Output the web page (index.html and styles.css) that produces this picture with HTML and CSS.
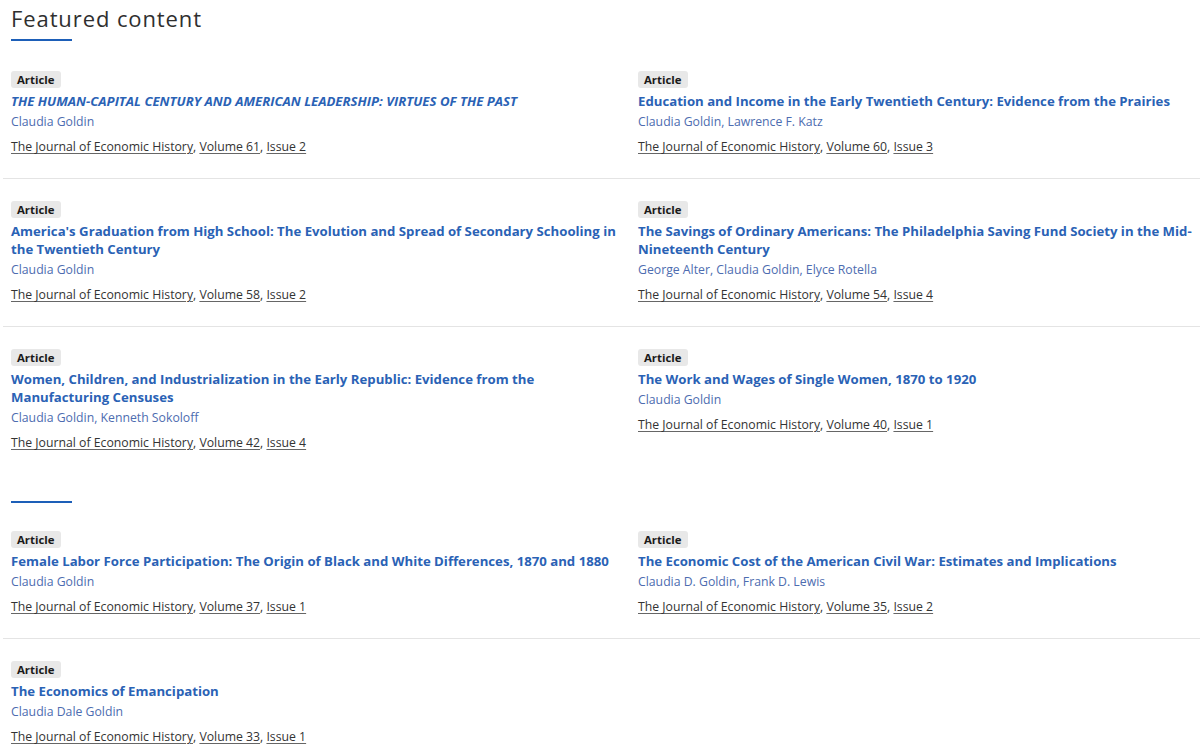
FILE: index.html
```html
<!DOCTYPE html>
<html lang="en">
<head>
<meta charset="utf-8">
<title>Featured content</title>
<link rel="stylesheet" href="styles.css">
</head>
<body>
<section class="featured">
  <div class="section-head">
    <h2 class="section-title">Featured content</h2>
    <div class="section-bar"></div>
  </div>
  <div class="row">
    <article class="item">
      <span class="badge">Article</span>
      <a class="title italic" href="#">THE HUMAN-CAPITAL CENTURY AND AMERICAN LEADERSHIP: VIRTUES OF THE PAST</a>
      <div class="authors">Claudia Goldin</div>
      <div class="source"><a href="#">The Journal of Economic History</a>, <a href="#">Volume 61</a>, <a href="#">Issue 2</a></div>
    </article>
    <article class="item">
      <span class="badge">Article</span>
      <a class="title" href="#">Education and Income in the Early Twentieth Century: Evidence from the Prairies</a>
      <div class="authors">Claudia Goldin, Lawrence F. Katz</div>
      <div class="source"><a href="#">The Journal of Economic History</a>, <a href="#">Volume 60</a>, <a href="#">Issue 3</a></div>
    </article>
  </div>
  <div class="row">
    <article class="item">
      <span class="badge">Article</span>
      <a class="title" href="#">America's Graduation from High School: The Evolution and Spread of Secondary Schooling in the Twentieth Century</a>
      <div class="authors">Claudia Goldin</div>
      <div class="source"><a href="#">The Journal of Economic History</a>, <a href="#">Volume 58</a>, <a href="#">Issue 2</a></div>
    </article>
    <article class="item">
      <span class="badge">Article</span>
      <a class="title" href="#">The Savings of Ordinary Americans: The Philadelphia Saving Fund Society in the Mid-Nineteenth Century</a>
      <div class="authors">George Alter, Claudia Goldin, Elyce Rotella</div>
      <div class="source"><a href="#">The Journal of Economic History</a>, <a href="#">Volume 54</a>, <a href="#">Issue 4</a></div>
    </article>
  </div>
  <div class="row last">
    <article class="item">
      <span class="badge">Article</span>
      <a class="title" href="#">Women, Children, and Industrialization in the Early Republic: Evidence from the Manufacturing Censuses</a>
      <div class="authors">Claudia Goldin, Kenneth Sokoloff</div>
      <div class="source"><a href="#">The Journal of Economic History</a>, <a href="#">Volume 42</a>, <a href="#">Issue 4</a></div>
    </article>
    <article class="item">
      <span class="badge">Article</span>
      <a class="title" href="#">The Work and Wages of Single Women, 1870 to 1920</a>
      <div class="authors">Claudia Goldin</div>
      <div class="source"><a href="#">The Journal of Economic History</a>, <a href="#">Volume 40</a>, <a href="#">Issue 1</a></div>
    </article>
  </div>
</section>
<section class="featured second">
  <div class="section-head empty">
    <div class="section-bar"></div>
  </div>
  <div class="row">
    <article class="item">
      <span class="badge">Article</span>
      <a class="title" href="#">Female Labor Force Participation: The Origin of Black and White Differences, 1870 and 1880</a>
      <div class="authors">Claudia Goldin</div>
      <div class="source"><a href="#">The Journal of Economic History</a>, <a href="#">Volume 37</a>, <a href="#">Issue 1</a></div>
    </article>
    <article class="item">
      <span class="badge">Article</span>
      <a class="title" href="#">The Economic Cost of the American Civil War: Estimates and Implications</a>
      <div class="authors">Claudia D. Goldin, Frank D. Lewis</div>
      <div class="source"><a href="#">The Journal of Economic History</a>, <a href="#">Volume 35</a>, <a href="#">Issue 2</a></div>
    </article>
  </div>
  <div class="row last">
    <article class="item">
      <span class="badge">Article</span>
      <a class="title" href="#">The Economics of Emancipation</a>
      <div class="authors">Claudia Dale Goldin</div>
      <div class="source"><a href="#">The Journal of Economic History</a>, <a href="#">Volume 33</a>, <a href="#">Issue 1</a></div>
    </article>
    <div class="item"></div>
  </div>
</section>
</body>
</html>
```

FILE: styles.css
```css
html, body {
  margin: 0;
  padding: 0;
  background: #ffffff;
}

body {
  font-family: "Open Sans", "Noto Sans", "Liberation Sans", sans-serif;
  color: #333333;
  overflow: hidden;
  height: 755px;
}

.featured {
  margin-left: 3px;
  width: 1197px;
}

.section-head {
  padding: 0 0 8px 8px;
}

.section-title {
  margin: 0;
  padding-top: 3px;
  font-family: "Open Sans", "Noto Sans", sans-serif;
  font-weight: 400;
  font-size: 22px;
  line-height: 30px;
  letter-spacing: 0.9px;
  color: #2f2f2f;
  height: 36px;
}

.section-bar {
  width: 61px;
  height: 2px;
  background: #1d5fb8;
}

.second {
  margin-top: 27px;
}

.section-head.empty {
  padding-bottom: 6px;
}

.row {
  display: grid;
  grid-template-columns: 627px 1fr;
  border-bottom: 1px solid #e4e4e4;
}

.row.last {
  border-bottom: none;
}

.item {
  display: flex;
  flex-direction: column;
  align-items: flex-start;
  padding: 22px 0 21px 8px;
}

.item:first-child {
  padding-right: 8px;
}

.badge {
  display: inline-block;
  background: #e8e8e8;
  border-radius: 3px;
  padding: 0 6px;
  font-size: 11.4px;
  font-weight: 700;
  line-height: 17px;
  color: #1a1a1a;
  margin-bottom: 4px;
}

.title {
  font-size: 13.2px;
  font-weight: 700;
  line-height: 18px;
  color: #2a62b5;
  text-decoration: none;
}

.title.italic {
  font-style: italic;
}

.authors {
  font-size: 12.25px;
  line-height: 20px;
  color: #4d6cb0;
  margin-top: 2px;
}

.source {
  font-size: 12.25px;
  line-height: 20px;
  margin-top: 5px;
  color: #333333;
}

.source a {
  color: #333333;
  text-decoration: underline;
  text-decoration-color: #666666;
  text-underline-offset: 2px;
}
```
